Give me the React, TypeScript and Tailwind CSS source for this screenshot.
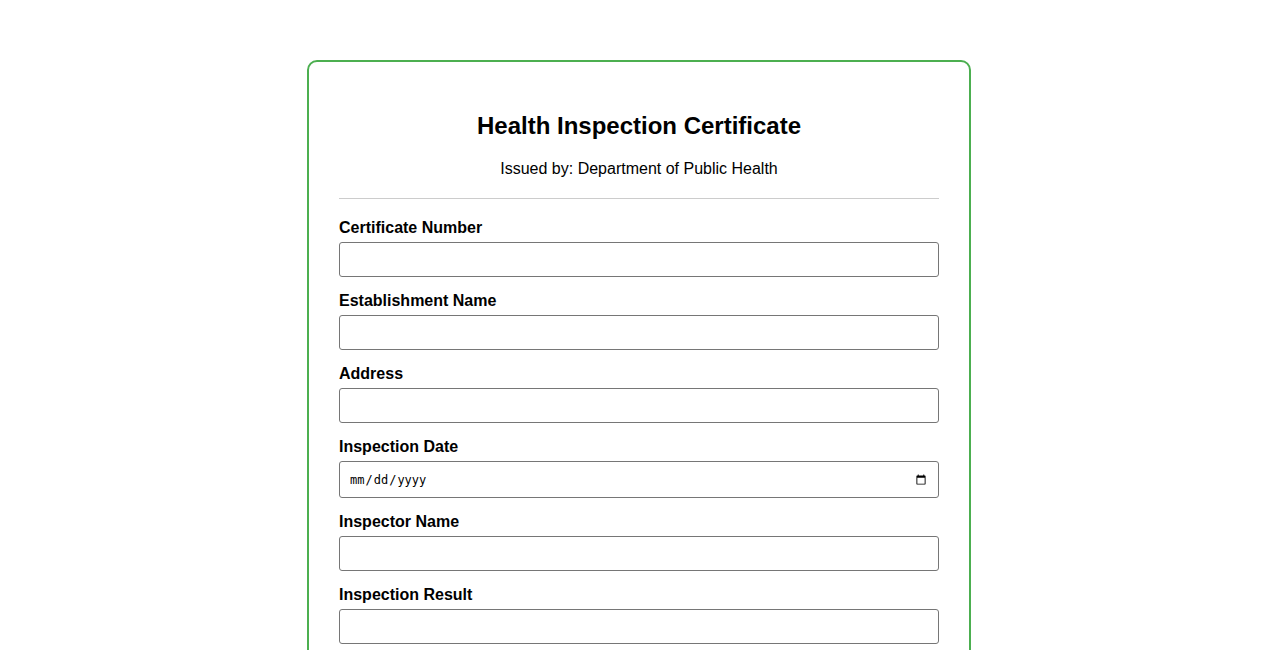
import React from "react";

const fields = [
  { label: "Certificate Number", type: "text" },
  { label: "Establishment Name", type: "text" },
  { label: "Address", type: "text" },
  { label: "Inspection Date", type: "date" },
  { label: "Inspector Name", type: "text" },
  { label: "Inspection Result", type: "text" },
];

export default function App() {
  return (
    <main className="min-h-screen bg-white pt-[60px] pb-10 font-['Liberation_Sans',Arial,sans-serif] text-black">
      <div className="mx-auto w-[664px] rounded-[10px] border-2 border-[#4caf50] p-[30px]">
        <h2 className="mt-5 text-center text-[24px] font-bold leading-[28px]">
          Health Inspection Certificate
        </h2>
        <p className="mt-5 text-center text-[16px] leading-[18px]">
          Issued by: Department of Public Health
        </p>
        <hr className="mt-5 border-t border-[#ccc]" />
        <form className="mt-5">
          {fields.map((f) => (
            <div key={f.label} className="mb-[15px]">
              <label className="mb-[5px] block text-[16px] font-bold leading-[18px]">
                {f.label}
              </label>
              {f.type === "date" ? (
                <input
                  type="date"
                  className="block h-[37px] w-full rounded-[3px] border border-[#767676] px-[9px] font-['DejaVu_Sans_Mono',monospace] text-[12px]"
                />
              ) : (
                <input
                  type="text"
                  className="block h-[35px] w-full rounded-[3px] border border-[#767676] px-2 text-[16px]"
                />
              )}
            </div>
          ))}
        </form>
      </div>
    </main>
  );
}
